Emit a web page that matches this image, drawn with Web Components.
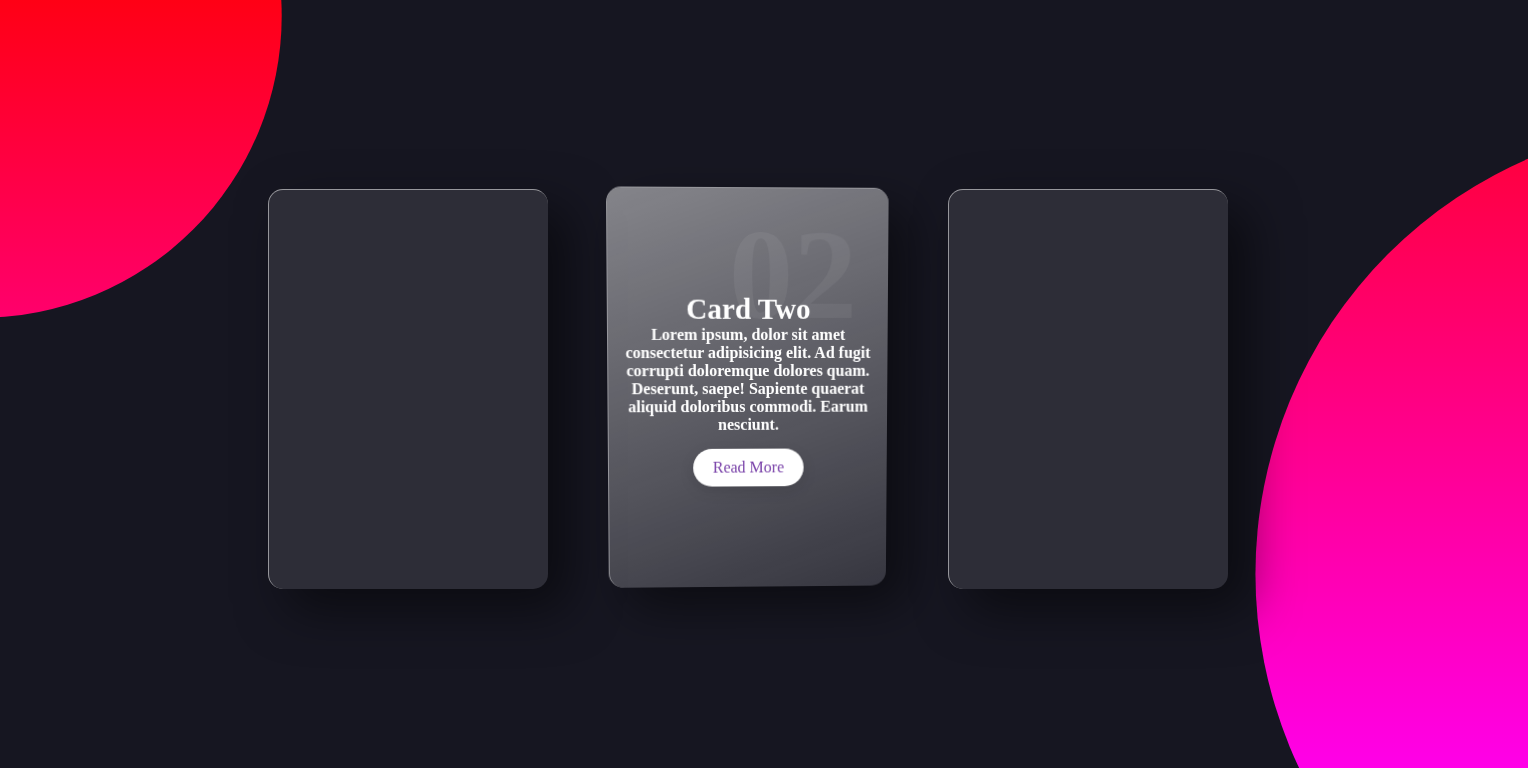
<!DOCTYPE html>
<html lang="en">
<head>
<meta charset="utf-8">
<meta name="viewport" content="width=device-width, initial-scale=1">
<title>Glass Cards</title>
<style>
  body {
    margin: 0;
    background: #161621;
    color: #fff;
    font-family: "Liberation Serif", "Times New Roman", serif;
  }
</style>
</head>
<body>
<card-stage>
  <glass-card></glass-card>
  <glass-card active>
    <card-content number="02" heading="Card Two" href="#card-two">Lorem ipsum, dolor sit amet consectetur adipisicing elit. Ad fugit corrupti doloremque dolores quam. Deserunt, saepe! Sapiente quaerat aliquid doloribus commodi. Earum nesciunt.</card-content>
  </glass-card>
  <glass-card></glass-card>
</card-stage>

<script>
  const shadow = (host, html) => {
    const root = host.attachShadow({ mode: "open" });
    root.innerHTML = html;
    return root;
  };

  /* Full-window stage: two gradient discs behind a centred row of cards. */
  customElements.define("card-stage", class extends HTMLElement {
    constructor() {
      super();
      shadow(this, `
        <style>
          :host {
            display: grid;
            place-items: center;
            box-sizing: border-box;
            min-height: 100vh;
            padding: 10px 32px 0 0;
            position: relative;
            overflow: hidden;
            isolation: isolate;
          }
          .disc {
            position: absolute;
            inset: -77px -180px -85px -212px;
            z-index: -1;
            background: linear-gradient(#f00, #f0f);
          }
          .small { clip-path: circle(20% at 10% 10%); }
          .large { clip-path: circle(30% at 100% 70%); }
          main {
            display: flex;
            flex-wrap: wrap;
            justify-content: center;
            gap: 60px;
          }
        </style>
        <div class="disc small"></div>
        <div class="disc large"></div>
        <main><slot></slot></main>`);
    }
  });

  customElements.define("glass-card", class extends HTMLElement {
    constructor() {
      super();
      shadow(this, `
        <style>
          :host {
            display: flex;
            align-items: center;
            justify-content: center;
            box-sizing: border-box;
            width: 280px;
            min-height: 400px;
            position: relative;
            overflow: hidden;
            border-top: 1px solid rgba(255, 255, 255, .5);
            border-left: 1px solid rgba(255, 255, 255, .5);
            border-radius: 15px;
            background: rgba(255, 255, 255, .1);
            box-shadow: 20px 20px 50px rgba(0, 0, 0, .5);
          }
          :host([active]) {
            transform: perspective(1000px) rotateX(-3deg) rotateY(2deg);
          }
          .glare { display: none; }
          :host([active]) .glare {
            display: block;
            position: absolute;
            inset: 0;
            pointer-events: none;
            background: linear-gradient(160deg, rgba(255, 255, 255, .41), rgba(255, 255, 255, .04));
          }
        </style>
        <div class="glare"></div>
        <slot></slot>`);
    }
  });

  customElements.define("card-content", class extends HTMLElement {
    constructor() {
      super();
      const root = shadow(this, `
        <style>
          :host {
            display: block;
            padding: 0 16px;
            text-align: center;
          }
          .number {
            position: absolute;
            top: 12px;
            right: 31px;
            font-size: 128px;
            line-height: 147px;
            font-weight: bold;
            color: rgba(255, 255, 255, .06);
            pointer-events: none;
          }
          h2, p { position: relative; margin: 0; font-weight: bold; }
          h2 { font-size: 29px; line-height: 33px; }
          p { font-size: 16px; line-height: 18px; }
          a {
            position: relative;
            display: inline-block;
            margin-top: 15px;
            padding: 10px 20px;
            border-radius: 20px;
            background: #fff;
            box-shadow: 0 5px 15px rgba(0, 0, 0, .1);
            color: #7840a8;
            font-size: 16px;
            line-height: 18px;
            text-decoration: none;
          }
        </style>
        <div class="number"></div>
        <h2></h2>
        <p><slot></slot></p>
        <a>Read More</a>`);
      root.querySelector(".number").textContent = this.getAttribute("number");
      root.querySelector("h2").textContent = this.getAttribute("heading");
      root.querySelector("a").href = this.getAttribute("href");
    }
  });
</script>
</body>
</html>
